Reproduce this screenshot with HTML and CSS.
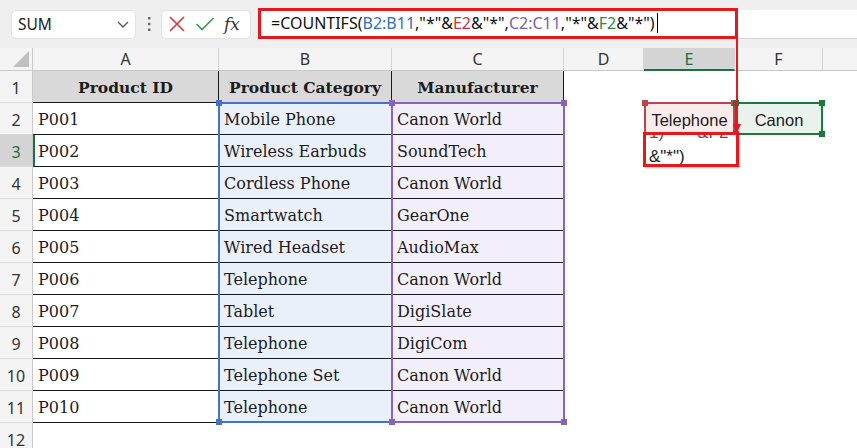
FILE: index.html
```html
<!DOCTYPE html>
<html lang="en">
<head>
  <meta charset="UTF-8" />
  <title>COUNTIFS wildcard</title>
  <link rel="stylesheet" href="styles.css">
</head>
<body>
<div class="app">
  <div class="toolbar">
    <div class="nameBox">
      <span>SUM</span>
      <svg width="12" height="7" viewBox="0 0 12 7"><polyline points="1,1 6,6 11,1" fill="none" stroke="#555" stroke-width="1.3"/></svg>
    </div>
    <svg class="grip" width="4" height="16" viewBox="0 0 4 16">
      <rect x="1" y="1" width="2.4" height="2.4" fill="#666"/>
      <rect x="1" y="6.8" width="2.4" height="2.4" fill="#666"/>
      <rect x="1" y="12.6" width="2.4" height="2.4" fill="#666"/>
    </svg>
    <div class="fxBox">
      <svg width="18" height="18" viewBox="0 0 18 18"><path d="M2 2 L16 16 M16 2 L2 16" stroke="#d8363a" stroke-width="1.6" fill="none"/></svg>
      <svg width="20" height="18" viewBox="0 0 20 18"><polyline points="1.5,9 7,14.5 18.5,3" fill="none" stroke="#3a9a4f" stroke-width="1.6"/></svg>
      <span class="fx">fx</span>
    </div>
    <div class="formulaBar">
      <div class="formulaEdit">=COUNTIFS(<span class="refB">B2:B11</span>,"*"&amp;<span class="refE">E2</span>&amp;"*",<span class="refC">C2:C11</span>,"*"&amp;<span class="refF">F2</span>&amp;"*")<span class="caret"></span></div>
    </div>
  </div>

  <div class="sheet">
    <div class="corner"><svg width="16" height="16" viewBox="0 0 16 16"><polygon points="16,0 16,16 0,16" fill="#bfbfbf"/></svg></div>
    <div class="ch">A</div>
    <div class="ch">B</div>
    <div class="ch">C</div>
    <div class="ch">D</div>
    <div class="ch active">E</div>
    <div class="ch">F</div>
    <div class="ch last"></div>

    <div class="rh">1</div>
    <div class="cell t hd">Product ID</div>
    <div class="cell t hd">Product Category</div>
    <div class="cell t hd">Manufacturer</div>
    <div class="cell"></div><div class="cell"></div><div class="cell"></div><div class="cell"></div>

    <div class="rh">2</div>
    <div class="cell t">P001</div>
    <div class="cell t cat">Mobile Phone</div>
    <div class="cell t mfr">Canon World</div>
    <div class="cell"></div>
    <div class="cell crit critE">Telephone</div>
    <div class="cell crit critF">Canon</div>
    <div class="cell"></div>

    <div class="rh activeRow">3</div>
    <div class="cell t activeCol">P002</div>
    <div class="cell t cat">Wireless Earbuds</div>
    <div class="cell t mfr">SoundTech</div>
    <div class="cell"></div><div class="cell"></div><div class="cell"></div><div class="cell"></div>

    <div class="rh">4</div>
    <div class="cell t">P003</div>
    <div class="cell t cat">Cordless Phone</div>
    <div class="cell t mfr">Canon World</div>
    <div class="cell"></div><div class="cell"></div><div class="cell"></div><div class="cell"></div>

    <div class="rh">5</div>
    <div class="cell t">P004</div>
    <div class="cell t cat">Smartwatch</div>
    <div class="cell t mfr">GearOne</div>
    <div class="cell"></div><div class="cell"></div><div class="cell"></div><div class="cell"></div>

    <div class="rh">6</div>
    <div class="cell t">P005</div>
    <div class="cell t cat">Wired Headset</div>
    <div class="cell t mfr">AudioMax</div>
    <div class="cell"></div><div class="cell"></div><div class="cell"></div><div class="cell"></div>

    <div class="rh">7</div>
    <div class="cell t">P006</div>
    <div class="cell t cat">Telephone</div>
    <div class="cell t mfr">Canon World</div>
    <div class="cell"></div><div class="cell"></div><div class="cell"></div><div class="cell"></div>

    <div class="rh">8</div>
    <div class="cell t">P007</div>
    <div class="cell t cat">Tablet</div>
    <div class="cell t mfr">DigiSlate</div>
    <div class="cell"></div><div class="cell"></div><div class="cell"></div><div class="cell"></div>

    <div class="rh">9</div>
    <div class="cell t">P008</div>
    <div class="cell t cat">Telephone</div>
    <div class="cell t mfr">DigiCom</div>
    <div class="cell"></div><div class="cell"></div><div class="cell"></div><div class="cell"></div>

    <div class="rh">10</div>
    <div class="cell t">P009</div>
    <div class="cell t cat">Telephone Set</div>
    <div class="cell t mfr">Canon World</div>
    <div class="cell"></div><div class="cell"></div><div class="cell"></div><div class="cell"></div>

    <div class="rh">11</div>
    <div class="cell t">P010</div>
    <div class="cell t cat">Telephone</div>
    <div class="cell t mfr">Canon World</div>
    <div class="cell"></div><div class="cell"></div><div class="cell"></div><div class="cell"></div>

    <div class="rh">12</div>
    <div class="cell"></div><div class="cell"></div><div class="cell"></div>
    <div class="cell"></div><div class="cell"></div><div class="cell"></div><div class="cell"></div>

    <!-- range highlights drawn over the cells -->
    <div class="range rangeB">
      <i class="h tl"></i><i class="h tr"></i><i class="h bl"></i><i class="h br"></i>
    </div>
    <div class="range rangeC">
      <i class="h tl"></i><i class="h tr"></i><i class="h bl"></i><i class="h br"></i>
    </div>
    <div class="range rangeE">
      <i class="h tl"></i><i class="h tr"></i>
    </div>
    <div class="range rangeF">
      <i class="h tl"></i><i class="h tr"></i><i class="h bl"></i><i class="h br"></i>
    </div>

    <div class="editBox">
      <div class="editText">
        <div class="clipLine">1)&nbsp;&nbsp;&nbsp;&nbsp;&nbsp;&nbsp;&nbsp;&amp;F2</div>
        <div>&amp;"*")</div>
      </div>
    </div>
  </div>

  <svg class="arrow" width="10" height="98" viewBox="0 0 10 98">
    <line x1="5" y1="0" x2="5" y2="88" stroke="#e3191f" stroke-width="2"/>
    <polygon points="1,86 9,86 5,95" fill="#e3191f"/>
  </svg>
</div>
</body>
</html>
```

FILE: styles.css
```css
* { margin: 0; padding: 0; box-sizing: border-box; }
html, body {
  width: 857px;
  height: 448px;
  overflow: hidden;
  background: #fff;
  font-family: "Noto Sans", "Open Sans", sans-serif;
  color: #222;
}
.app {
  position: relative;
  height: 448px;
}

/* formula toolbar */
.toolbar {
  display: flex;
  align-items: center;
  height: 48px;
  padding-left: 11px;
  background: #efefef;
}
.nameBox {
  display: flex;
  align-items: center;
  justify-content: space-between;
  width: 125px;
  height: 29px;
  padding: 0 6px 0 6px;
  background: #fff;
  border-radius: 5px;
  border: 1px solid #e2e2e2;
  font-size: 15.5px;
}
.grip {
  margin: 0 10px 0 11px;
}
.fxBox {
  display: flex;
  align-items: center;
  gap: 9px;
  width: 90px;
  height: 29px;
  padding-left: 6px;
  background: #fff;
  border-radius: 5px;
  border: 1px solid #e2e2e2;
}
.fx {
  font-family: "DejaVu Serif", serif;
  font-style: italic;
  font-size: 17px;
  color: #333;
}
.formulaBar {
  flex: 1;
  height: 29px;
  margin-left: 7px;
  background: #fff;
  border-bottom: 1px solid #d6d6d6;
}
.formulaEdit {
  display: flex;
  align-items: center;
  width: 480px;
  height: 31px;
  margin-top: -2px;
  padding-left: 10px;
  border: 3px solid #e3191f;
  font-size: 16px;
  white-space: pre;
  color: #111;
}
.refB { color: #2f6fba; }
.refE { color: #c0393d; }
.refC { color: #7e5bb5; }
.refF { color: #2f8a45; }
.caret {
  display: inline-block;
  width: 1px;
  height: 20px;
  margin-left: 2px;
  background: #000;
}

/* sheet grid */
.sheet {
  position: relative;
  display: grid;
  grid-template-columns: 33px 186px 173px 172px 80px 91px 88px 1fr;
  grid-template-rows: 23px repeat(11, 32px) 32px;
  height: 400px;
  overflow: hidden;
}
.corner {
  display: flex;
  align-items: flex-end;
  justify-content: flex-end;
  padding: 0 3px 3px 0;
  background: #f4f4f4;
  border-right: 1px solid #c9c9c9;
  border-bottom: 1px solid #c9c9c9;
}
.ch {
  display: flex;
  align-items: center;
  justify-content: center;
  background: #f4f4f4;
  border-right: 1px solid #d3d3d3;
  border-bottom: 1px solid #c9c9c9;
  font-size: 16px;
  color: #333;
}
.ch.active {
  background: #d4d4d4;
  color: #1f6b3c;
  border-bottom: 2px solid #1d7044;
}
.ch.last { border-right: none; }
.rh {
  display: flex;
  align-items: flex-end;
  justify-content: center;
  padding-bottom: 3px;
  background: #f4f4f4;
  border-right: 1px solid #c9c9c9;
  border-bottom: 1px solid #dadada;
  font-size: 16px;
  color: #333;
}
.rh.activeRow {
  background: #d4d4d4;
  color: #1f6b3c;
}

.cell {
  display: flex;
  align-items: center;
  padding: 1px 5px 0;
  font-family: "DejaVu Serif", "Liberation Serif", serif;
  font-size: 16px;
  color: #1c1c1c;
  white-space: nowrap;
}
.cell.t {
  border-bottom: 1px solid #1a1a1a;
  border-right: 1px solid #1a1a1a;
}
.cell.hd {
  justify-content: center;
  background: #d9d9d9;
  font-weight: bold;
  font-size: 15.5px;
}
.cell.cat { background: #eaf0fa; }
.cell.mfr { background: #f3effa; }
.cell.activeCol { border-left: 2px solid #1d7044; padding-left: 3px; }
.cell.crit {
  justify-content: center;
  padding-top: 3px;
  font-family: "Liberation Sans", "Noto Sans", sans-serif;
  font-size: 16.5px;
}
.critE { background: #fcebeb; }
.critF { background: #e9f3ec; }

/* coloured reference outlines: absolutely placed on grid areas so they take no cells */
.range {
  position: absolute;
  pointer-events: none;
}
.rangeB {
  grid-column: 3 / 4;
  grid-row: 3 / 13;
  inset: -1px -1px 0 -1px;
  border: 2px solid #4472c4;
}
.rangeC {
  grid-column: 4 / 5;
  grid-row: 3 / 13;
  inset: -1px -1px 0 -1px;
  border: 2px solid #8764b8;
}
.rangeE {
  grid-column: 6 / 7;
  grid-row: 3 / 4;
  inset: -1px 0 0 0;
  border: 2px solid #b8464a;
}
.rangeF {
  grid-column: 7 / 8;
  grid-row: 3 / 4;
  inset: -1px 0 0 0;
  border: 2px solid #1d7a3a;
}
.h {
  position: absolute;
  width: 6px;
  height: 6px;
}
.rangeB .h { background: #4472c4; }
.rangeC .h { background: #8764b8; }
.rangeE .h { background: #b8464a; }
.rangeF .h { background: #1d7a3a; }
.h.tl { top: -4px; left: -4px; }
.h.tr { top: -4px; right: -4px; }
.h.bl { bottom: -4px; left: -4px; }
.h.br { bottom: -4px; right: -4px; }

/* in-cell edit box */
.editBox {
  position: absolute;
  grid-column: 6 / 7;
  grid-row: 4 / 5;
  inset: -3px -4px 0 -1px;
  background: #fff;
  border: 3px solid #e3191f;
  box-shadow: 1px 1px 2px rgba(0, 0, 0, 0.25);
  overflow: hidden;
}
.editText {
  margin-top: -14px;
  padding-left: 3px;
  font-family: "Liberation Sans", "Noto Sans", sans-serif;
  font-size: 17px;
  line-height: 24px;
  color: #222;
}
.editText div { white-space: nowrap; }
.clipLine { color: #555; }

.arrow {
  position: absolute;
  left: 732px;
  top: 38px;
}
```
